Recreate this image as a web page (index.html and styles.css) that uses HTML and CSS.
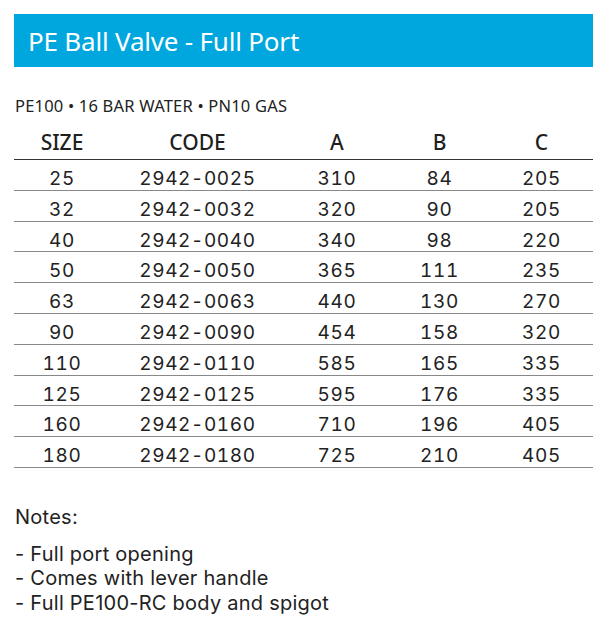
FILE: index.html
```html
<!DOCTYPE html>
<html>
<head>
<meta charset="utf-8">
<link rel="stylesheet" href="styles.css">
</head>
<body>
<div class="page">
  <div class="banner"><h1 class="title">PE Ball Valve - Full Port</h1></div>
  <p class="subtitle">PE100 • 16 BAR WATER • PN10 GAS</p>
  <table class="spec">
    <thead>
      <tr><th class="c-size">SIZE</th><th class="c-code">CODE</th><th class="c-a">A</th><th class="c-b">B</th><th class="c-c">C</th></tr>
    </thead>
    <tbody>
      <tr><td>25</td><td>2942-0025</td><td>310</td><td>84</td><td>205</td></tr>
      <tr><td>32</td><td>2942-0032</td><td>320</td><td>90</td><td>205</td></tr>
      <tr><td>40</td><td>2942-0040</td><td>340</td><td>98</td><td>220</td></tr>
      <tr><td>50</td><td>2942-0050</td><td>365</td><td>111</td><td>235</td></tr>
      <tr><td>63</td><td>2942-0063</td><td>440</td><td>130</td><td>270</td></tr>
      <tr><td>90</td><td>2942-0090</td><td>454</td><td>158</td><td>320</td></tr>
      <tr><td>110</td><td>2942-0110</td><td>585</td><td>165</td><td>335</td></tr>
      <tr><td>125</td><td>2942-0125</td><td>595</td><td>176</td><td>335</td></tr>
      <tr><td>160</td><td>2942-0160</td><td>710</td><td>196</td><td>405</td></tr>
      <tr><td>180</td><td>2942-0180</td><td>725</td><td>210</td><td>405</td></tr>
    </tbody>
  </table>
  <div class="notes">
    <p class="notes-head">Notes:</p>
    <ul class="notes-list">
      <li>- Full port opening</li>
      <li>- Comes with lever handle</li>
      <li>- Full PE100-RC body and spigot</li>
    </ul>
  </div>
</div>
</body>
</html>
```

FILE: styles.css
```css
html, body { margin: 0; padding: 0; background: #fff; }
.page { padding: 14px 14px 0 14px; color: #222; }
.banner {
  background: #00a7de;
  height: 53px;
  display: flex;
  align-items: center;
  padding-left: 14px;
}
.title {
  margin: 0;
  font-family: "Noto Sans", sans-serif;
  font-weight: 400;
  font-size: 26px;
  line-height: 30px;
  color: #fff;
  letter-spacing: -0.2px;
}
.subtitle {
  margin: 28.5px 0 0 1px;
  font-family: "Noto Sans", sans-serif;
  font-size: 16.5px;
  line-height: 20px;
  letter-spacing: 0.2px;
  color: #222;
}
.spec {
  width: 579px;
  border-collapse: collapse;
  margin-top: 14.5px;
  table-layout: fixed;
}
.spec th {
  font-family: "Noto Sans", sans-serif;
  font-weight: 500;
  font-size: 21px;
  line-height: 24px;
  padding: 0 0 5px;
  vertical-align: bottom;
  border-bottom: 1.5px solid #333;
  color: #1f1f1f;
}
.c-size { width: 96px; }
.c-code { width: 175px; }
.c-a { width: 104px; }
.c-b { width: 101px; }
.spec td {
  font-family: Inter, sans-serif;
  font-size: 19px;
  line-height: 20px;
  font-variant-numeric: tabular-nums;
  text-align: center;
  padding: 9px 0 0.8px;
  border-bottom: 1px solid #888;
  color: #222;
  letter-spacing: 0.6px;
}
.notes { margin-top: 37px; font-family: Inter, sans-serif; font-size: 20px; color: #222; letter-spacing: 0.25px; }
.notes-head { margin: 0 0 0 1px; line-height: 24px; }
.notes-list { list-style: none; margin: 13px 0 0 1px; padding: 0; }
.notes-list li { line-height: 24.5px; }
```
